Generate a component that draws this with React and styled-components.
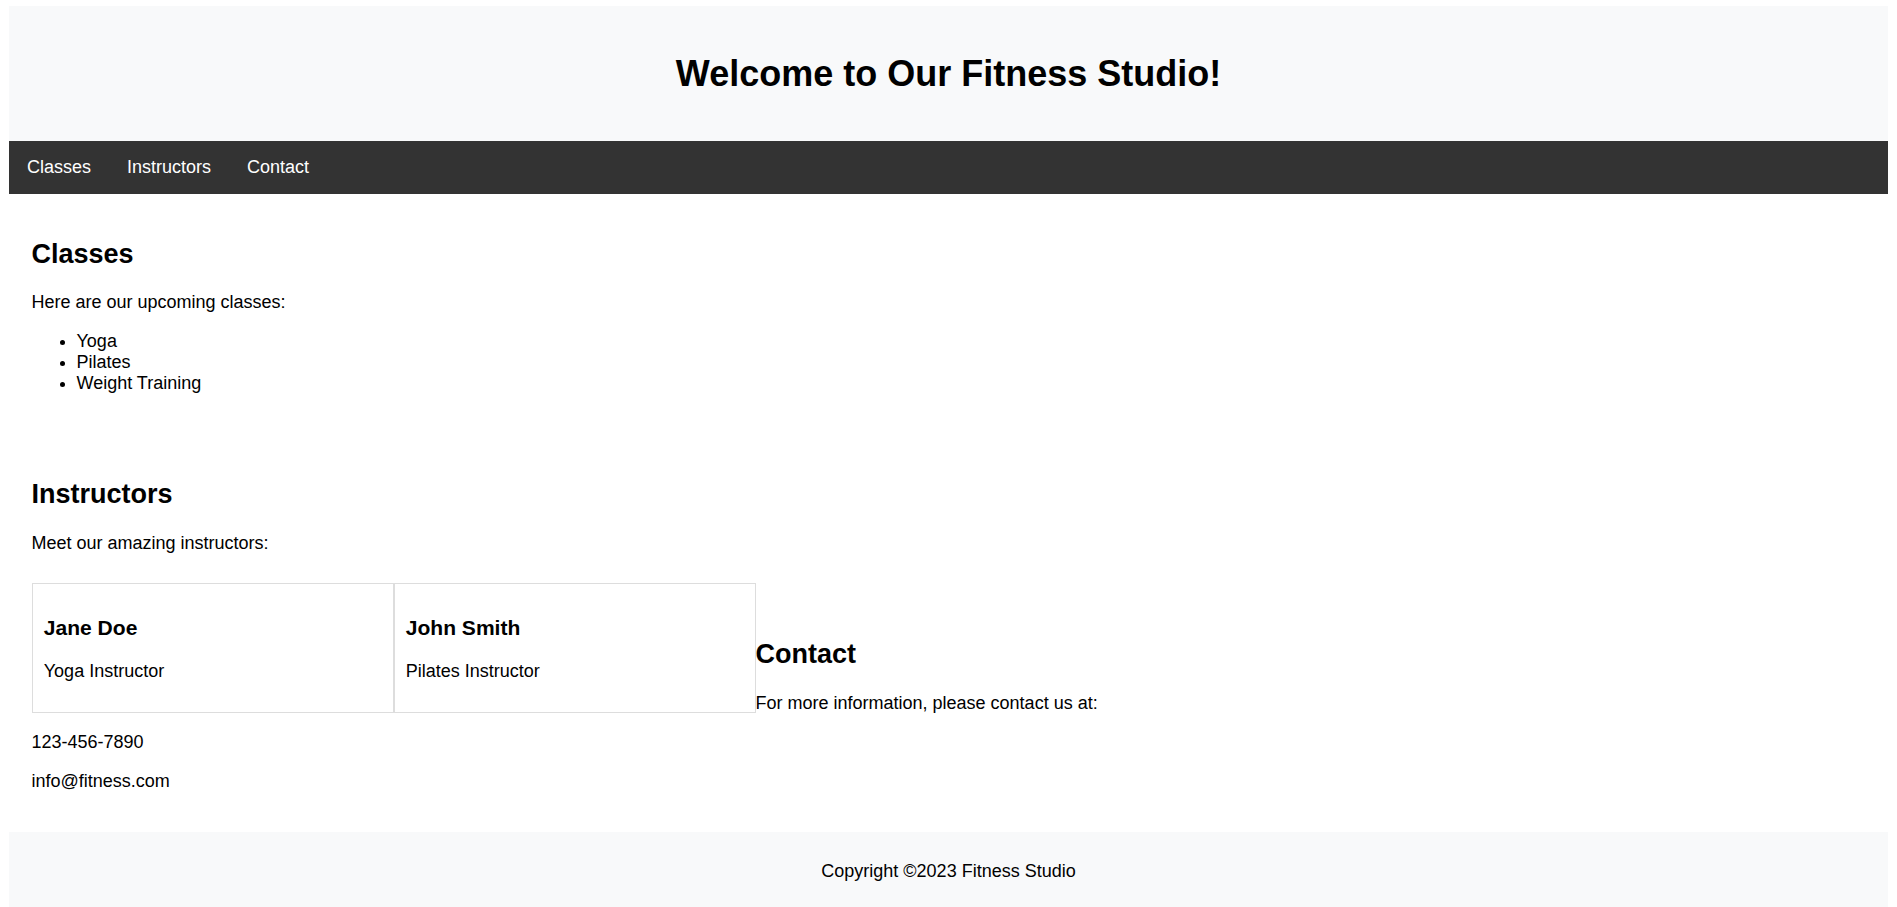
import React from "react";
import styled, { createGlobalStyle } from "styled-components";

const GlobalStyle = createGlobalStyle`
  html {
    overflow: hidden;
  }
  body {
    margin: 6px 9px 0;
    font-family: "Liberation Sans", Arial, Helvetica, sans-serif;
    font-size: 18px;
    color: #000;
    background: #fff;
  }
`;

const Header = styled.header`
  background: #f8f9fa;
  padding: 22.5px;
  text-align: center;
`;

const Title = styled.h1`
  font-size: 36px;
  font-weight: bold;
  margin: 24.12px 0;
`;

const Nav = styled.nav`
  background: #333;
  padding: 15.75px 0;
  display: flex;
`;

const NavLink = styled.a`
  color: #fff;
  text-decoration: none;
  padding: 0 18px;
  line-height: normal;
`;

const Main = styled.main``;

const Section = styled.section`
  padding: 22.5px;
`;

const SectionTitle = styled.h2`
  font-size: 27px;
  font-weight: bold;
  margin: 22.4px 0;
`;

const Text = styled.p`
  margin: 18px 0;
`;

const List = styled.ul`
  margin: 18px 0;
  padding-left: 45px;
`;

const Card = styled.div`
  float: left;
  width: 337.5px;
  padding: 11.25px;
  border: 1px solid #ddd;
  margin: 11.25px 0;
`;

const CardName = styled.h3`
  font-size: 21.06px;
  font-weight: bold;
  margin: 21.06px 0;
`;

const Footer = styled.footer`
  background: #f8f9fa;
  padding: 11.25px;
  text-align: center;
`;

const classes = ["Yoga", "Pilates", "Weight Training"];
const instructors = [
  { name: "Jane Doe", role: "Yoga Instructor" },
  { name: "John Smith", role: "Pilates Instructor" },
];

export default function App() {
  return (
    <>
      <GlobalStyle />
      <Header>
        <Title>Welcome to Our Fitness Studio!</Title>
      </Header>
      <Nav>
        <NavLink href="#classes">Classes</NavLink>
        <NavLink href="#instructors">Instructors</NavLink>
        <NavLink href="#contact">Contact</NavLink>
      </Nav>
      <Main>
        <Section id="classes">
          <SectionTitle>Classes</SectionTitle>
          <Text>Here are our upcoming classes:</Text>
          <List>
            {classes.map((c) => (
              <li key={c}>{c}</li>
            ))}
          </List>
        </Section>
        <Section id="instructors">
          <SectionTitle>Instructors</SectionTitle>
          <Text>Meet our amazing instructors:</Text>
          {instructors.map((i) => (
            <Card key={i.name}>
              <CardName>{i.name}</CardName>
              <Text>{i.role}</Text>
            </Card>
          ))}
        </Section>
        <Section id="contact">
          <SectionTitle>Contact</SectionTitle>
          <Text>For more information, please contact us at:</Text>
          <Text>123-456-7890</Text>
          <Text>info@fitness.com</Text>
        </Section>
      </Main>
      <Footer>
        <Text>Copyright ©2023 Fitness Studio</Text>
      </Footer>
    </>
  );
}
